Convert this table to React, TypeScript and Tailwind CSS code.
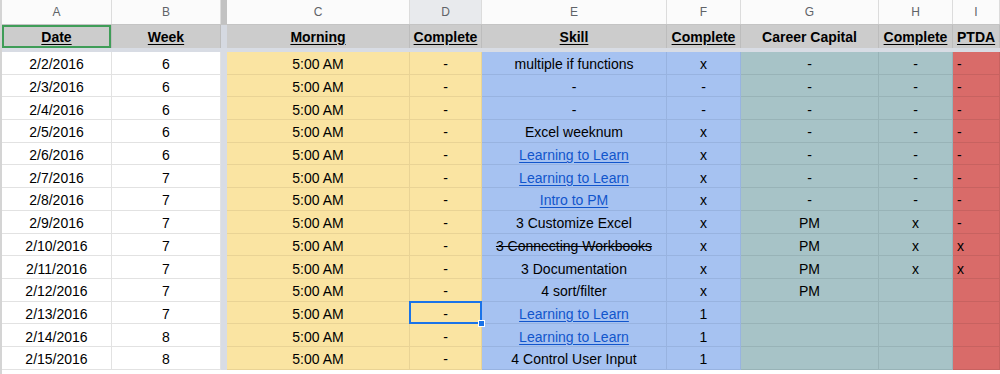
const cols = [
  { key: "A", w: "w-[110px]", bg: "bg-white", line: "border-[#e2e2e2]", align: "justify-center" },
  { key: "B", w: "w-[109px]", bg: "bg-white", line: "border-[#e2e2e2]", align: "justify-center" },
  { key: "C", w: "w-[183px]", bg: "bg-[#fae4a2]", line: "border-[#e9d395]", align: "justify-center" },
  { key: "D", w: "w-[72px]", bg: "bg-[#fae4a2]", line: "border-[#e9d395]", align: "justify-center" },
  { key: "E", w: "w-[185px]", bg: "bg-[#a6c2f1]", line: "border-[#98b3e0]", align: "justify-center" },
  { key: "F", w: "w-[74px]", bg: "bg-[#a6c2f1]", line: "border-[#98b3e0]", align: "justify-center" },
  { key: "G", w: "w-[138px]", bg: "bg-[#a7c3c7]", line: "border-[#98b3b7]", align: "justify-center" },
  { key: "H", w: "w-[74px]", bg: "bg-[#a7c3c7]", line: "border-[#98b3b7]", align: "justify-center" },
  { key: "I", w: "w-[47px]", bg: "bg-[#d96b69]", line: "border-[#c76260]", align: "justify-start pl-[4px]" },
];

const headers = [
  { text: "Date", u: true },
  { text: "Week", u: true },
  { text: "Morning", u: true },
  { text: "Complete", u: true },
  { text: "Skill", u: true },
  { text: "Complete", u: true },
  { text: "Career Capital", u: false },
  { text: "Complete", u: true },
  { text: "PTDA", u: true },
];

type Skill = { t: string; link?: boolean; strike?: boolean };

const rows: { date: string; week: string; skill: Skill; f: string; g: string; h: string; i: string }[] = [
  { date: "2/2/2016", week: "6", skill: { t: "multiple if functions" }, f: "x", g: "-", h: "-", i: "-" },
  { date: "2/3/2016", week: "6", skill: { t: "-" }, f: "-", g: "-", h: "-", i: "-" },
  { date: "2/4/2016", week: "6", skill: { t: "-" }, f: "-", g: "-", h: "-", i: "-" },
  { date: "2/5/2016", week: "6", skill: { t: "Excel weeknum" }, f: "x", g: "-", h: "-", i: "-" },
  { date: "2/6/2016", week: "6", skill: { t: "Learning to Learn", link: true }, f: "x", g: "-", h: "-", i: "-" },
  { date: "2/7/2016", week: "7", skill: { t: "Learning to Learn", link: true }, f: "x", g: "-", h: "-", i: "-" },
  { date: "2/8/2016", week: "7", skill: { t: "Intro to PM", link: true }, f: "x", g: "-", h: "-", i: "-" },
  { date: "2/9/2016", week: "7", skill: { t: "3 Customize Excel" }, f: "x", g: "PM", h: "x", i: "-" },
  { date: "2/10/2016", week: "7", skill: { t: "3 Connecting Workbooks", strike: true }, f: "x", g: "PM", h: "x", i: "x" },
  { date: "2/11/2016", week: "7", skill: { t: "3 Documentation" }, f: "x", g: "PM", h: "x", i: "x" },
  { date: "2/12/2016", week: "7", skill: { t: "4 sort/filter" }, f: "x", g: "PM", h: "", i: "" },
  { date: "2/13/2016", week: "7", skill: { t: "Learning to Learn", link: true }, f: "1", g: "", h: "", i: "" },
  { date: "2/14/2016", week: "8", skill: { t: "Learning to Learn", link: true }, f: "1", g: "", h: "", i: "" },
  { date: "2/15/2016", week: "8", skill: { t: "4 Control User Input" }, f: "1", g: "", h: "", i: "" },
];

const Bar = ({ className }: { className: string }) => <div className={`w-[6px] shrink-0 ${className}`} />;

const App = () => {
  return (
    <div className="w-[1000px] h-[374px] overflow-hidden bg-white text-black font-['Liberation_Sans',Arial,sans-serif] border-l-2 border-[#d4d4d4]">
      {/* column letters */}
      <div className="flex h-[25px] border-b border-[#c4c4c4]">
        {cols.map((c, i) => (
          <>
            {i === 2 && <Bar key="bar-l" className="bg-[#c2c2c2]" />}
            <div
              key={c.key}
              className={`${c.w} shrink-0 flex items-center justify-center border-r border-[#dcdcdc] text-[12px] text-[#5f6368] ${c.key === "D" ? "bg-[#e8eaed]" : "bg-[#fbfbfb]"}`}
            >
              {c.key}
            </div>
          </>
        ))}
      </div>

      {/* header row */}
      <div className="flex h-[23px] bg-[#cccccc]">
        {cols.map((c, i) => (
          <>
            {i === 2 && <Bar key="bar-h" className="bg-[#d5d9e1]" />}
            <div
              key={c.key}
              className={`relative ${c.w} shrink-0 flex items-center ${c.align} pt-[1px] border-r border-[#bdbdbd] text-[14px] font-bold whitespace-nowrap`}
            >
              <span className={headers[i].u ? "underline underline-offset-2" : ""}>{headers[i].text}</span>
              {c.key === "A" && <div className="absolute inset-0 border-2 border-[#3f9d58]" />}
            </div>
          </>
        ))}
      </div>

      {/* frozen separator */}
      <div className="h-[4px] bg-[#d8dce4]" />

      {/* data */}
      {rows.map((r, ri) => {
        const vals: (string | Skill)[] = [r.date, r.week, "5:00 AM", "-", r.skill, r.f, r.g, r.h, r.i];
        return (
          <div key={ri} className="flex h-[22.7px]">
            {cols.map((c, i) => {
              const v = vals[i];
              let content: React.ReactNode = null;
              if (typeof v === "string") {
                content = v;
              } else {
                content = (
                  <span
                    className={
                      v.link
                        ? "text-[#1155cc] underline underline-offset-2"
                        : v.strike
                        ? "line-through"
                        : ""
                    }
                  >
                    {v.t}
                  </span>
                );
              }
              return (
                <>
                  {i === 2 && <Bar key={`bar-${ri}`} className="bg-[#d8dce4]" />}
                  <div
                    key={c.key}
                    className={`relative ${c.w} shrink-0 flex items-center ${c.align} pt-[4px] ${c.bg} border-r border-b ${c.line} text-[14px] whitespace-nowrap`}
                  >
                    {content}
                    {c.key === "D" && ri === 11 && (
                      <>
                        <div className="absolute z-10 -inset-px border-2 border-[#1a73e8]" />
                        <div className="absolute z-20 -right-[4px] -bottom-[4px] w-[7px] h-[7px] bg-[#1a73e8] border border-white" />
                      </>
                    )}
                  </div>
                </>
              );
            })}
          </div>
        );
      })}
    </div>
  );
};

export default App;
